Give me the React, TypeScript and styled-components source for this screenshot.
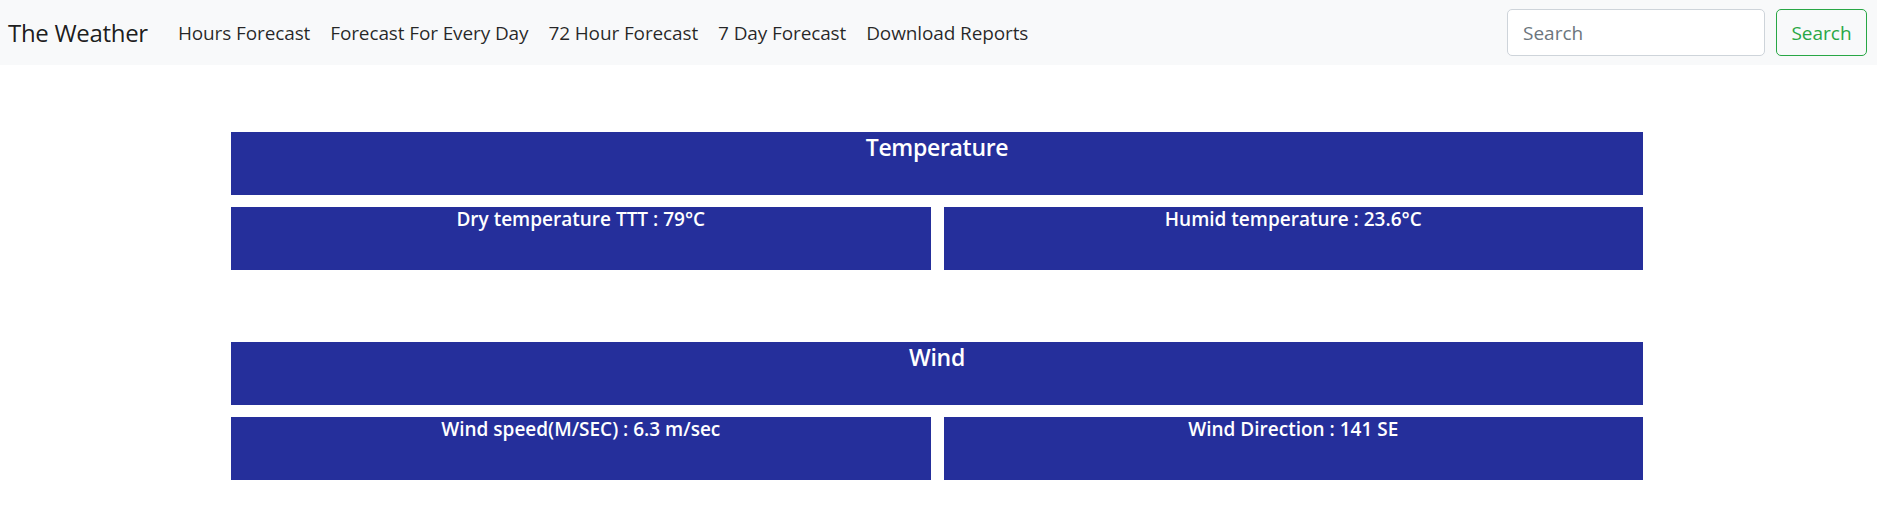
import React from "react";
import styled, { createGlobalStyle } from "styled-components";

const GlobalStyle = createGlobalStyle`
  body {
    margin: 0;
    background: #fff;
    font-family: "Open Sans", "Noto Sans", sans-serif;
    color: #212529;
  }
`;

const Navbar = styled.nav`
  display: flex;
  align-items: center;
  height: 65px;
  padding: 0 10px 0 8px;
  background-color: #f8f9fa;
`;

const Brand = styled.a`
  font-size: 24px;
  letter-spacing: -0.3px;
  color: rgba(0, 0, 0, 0.9);
  text-decoration: none;
  margin-right: 20px;
  white-space: nowrap;
`;

const NavList = styled.ul`
  display: flex;
  list-style: none;
  margin: 0;
  padding: 0;
  flex: 1;
`;

const NavLink = styled.a`
  display: block;
  padding: 10px;
  font-size: 19px;
  letter-spacing: -0.12px;
  color: rgba(0, 0, 0, 0.85);
  text-decoration: none;
  white-space: nowrap;
`;

const SearchForm = styled.form`
  display: flex;
  gap: 11px;
`;

const SearchInput = styled.input`
  width: 258px;
  height: 47px;
  box-sizing: border-box;
  padding: 0 15px;
  font-family: inherit;
  font-size: 19px;
  color: #495057;
  border: 1px solid #ced4da;
  border-radius: 5px;
  background: #fff;
  &::placeholder {
    color: #6c757d;
  }
`;

const SearchButton = styled.button`
  width: 91px;
  height: 47px;
  box-sizing: border-box;
  font-family: inherit;
  font-size: 19px;
  color: #28a745;
  background: transparent;
  border: 1px solid #28a745;
  border-radius: 5px;
`;

const Main = styled.main`
  width: 1412px;
  margin: 67px 0 0 231px;
  display: flex;
  flex-direction: column;
  gap: 72px;
`;

const Section = styled.section`
  display: flex;
  flex-direction: column;
  gap: 12px;
`;

const Panel = styled.div`
  height: 63px;
  background-color: #252f9b;
  color: #fff;
  text-align: center;
`;

const Title = styled.h5`
  margin: 0;
  padding-top: 2px;
  font-size: 23px;
  letter-spacing: -0.3px;
  font-weight: 600;
  line-height: 1.2;
`;

const Row = styled.div`
  display: grid;
  grid-template-columns: 1fr 1fr;
  gap: 13px;
`;

const Value = styled.h6`
  margin: 0;
  padding-top: 1px;
  font-size: 19px;
  font-weight: 600;
  line-height: 1.2;
`;

const links = [
  "Hours Forecast",
  "Forecast For Every Day",
  "72 Hour Forecast",
  "7 Day Forecast",
  "Download Reports",
];

const sections = [
  {
    title: "Temperature",
    items: ["Dry temperature TTT : 79°C", "Humid temperature : 23.6°C"],
  },
  {
    title: "Wind",
    items: ["Wind speed(M/SEC) : 6.3 m/sec", "Wind Direction : 141 SE"],
  },
];

export default function App() {
  return (
    <>
      <GlobalStyle />
      <Navbar>
        <Brand href="#">The Weather</Brand>
        <NavList>
          {links.map((l) => (
            <li key={l}>
              <NavLink href="#">{l}</NavLink>
            </li>
          ))}
        </NavList>
        <SearchForm onSubmit={(e) => e.preventDefault()}>
          <SearchInput type="search" placeholder="Search" />
          <SearchButton type="submit">Search</SearchButton>
        </SearchForm>
      </Navbar>
      <Main>
        {sections.map((s) => (
          <Section key={s.title}>
            <Panel>
              <Title>{s.title}</Title>
            </Panel>
            <Row>
              {s.items.map((item) => (
                <Panel key={item}>
                  <Value>{item}</Value>
                </Panel>
              ))}
            </Row>
          </Section>
        ))}
      </Main>
    </>
  );
}
